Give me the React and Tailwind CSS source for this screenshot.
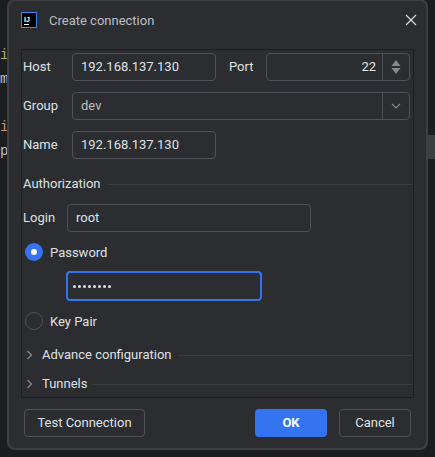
import React from 'react'

function Field({ value, className = '' }) {
  return (
    <div className={`h-[28px] flex items-center pl-[8px] border border-[#4e5157] rounded-[4px] text-[#dfe1e5] ${className}`}>
      {value}
    </div>
  )
}

function Chevron() {
  return (
    <svg width="8" height="10" viewBox="0 0 8 10" fill="none" className="ml-[4px] mr-[8px]">
      <path d="M1.500 1l4 4-4 4" stroke="#868a91" strokeWidth="1.2" />
    </svg>
  )
}

function Section({ label, className = '' }) {
  return (
    <div className={`flex items-center h-[20px] ${className}`}>
      <Chevron />
      <span className="text-[#dfe1e5]">{label}</span>
      <div className="flex-1 h-px bg-[#393b40] ml-[6px]" />
    </div>
  )
}

export default function App() {
  return (
    <div className="relative w-[435px] h-[457px] overflow-hidden bg-[#1c1d1f] text-[13px] leading-[16px] font-['Roboto',sans-serif]">
      {/* editor bits behind the dialog */}
      <div className="absolute left-0 top-[43px] font-['Liberation_Mono',monospace] text-[14px] leading-[24px]">
        <div className="text-[#b3ae60]">i</div>
        <div className="text-[#bcbec4]">m</div>
        <div>&nbsp;</div>
        <div className="text-[#cf8e6d]">i</div>
        <div className="text-[#bcbec4]">p</div>
      </div>
      <div className="absolute right-0 top-[135px] w-[8px] h-[24px] bg-[#3c3e42]" />

      <div className="relative ml-[7px] -mt-px w-[421px] h-[451px] bg-[#2b2d30] border-2 border-[#3d3f43] rounded-[8px] flex flex-col">
        <div className="h-[48px] flex items-start pt-[11px] pl-[12px] pr-[7px] shrink-0">
          <div className="w-[16px] h-[16px] bg-black border border-[#3b82f6] flex flex-col justify-center items-start pl-[2px] mr-[12px]">
            <span className="text-white text-[7px] leading-[7px] font-bold font-['Liberation_Sans',sans-serif]">IJ</span>
            <span className="block w-[5px] h-px bg-white mt-px" />
          </div>
          <span className="text-[#bcbec4] mt-px">Create connection</span>
          <svg width="12" height="12" viewBox="0 0 12 12" className="ml-auto mr-[2px] mt-[2px]" fill="none">
            <path d="M1 1l10 10M11 1L1 11" stroke="#dfe1e5" strokeWidth="1.1" />
          </svg>
        </div>

        <div className="ml-[12px] mr-[12px] h-[349px] border border-[#1e1f22] flex flex-col shrink-0">
          <div className="pt-[3px] flex items-center">
            <span className="w-[50px] text-[#dfe1e5] pl-px">Host</span>
            <Field value="192.168.137.130" className="w-[144px]" />
            <span className="w-[50px] pl-[13px] text-[#dfe1e5]">Port</span>
            <div className="w-[144px] h-[28px] flex items-center border border-[#4e5157] rounded-[4px] text-[#dfe1e5]">
              <span className="flex-1 text-right pr-[6px]">22</span>
              <div className="w-[27px] h-full border-l border-[#4e5157] flex flex-col items-center justify-center gap-[2px]">
                <svg width="10" height="6" viewBox="0 0 10 6"><path d="M5 0l4.500 6h-9z" fill="#868a91" /></svg>
                <svg width="10" height="6" viewBox="0 0 10 6"><path d="M5 6L.5 0h9z" fill="#868a91" /></svg>
              </div>
            </div>
          </div>

          <div className="pt-[11px] flex items-center">
            <span className="w-[50px] text-[#dfe1e5] pl-px">Group</span>
            <div className="w-[338px] h-[28px] flex items-center border border-[#4e5157] rounded-[4px]">
              <span className="flex-1 pl-[8px] text-[#bcbec4]">dev</span>
              <div className="w-[27px] h-full border-l border-[#4e5157] flex items-center justify-center">
                <svg width="10" height="6" viewBox="0 0 10 6" fill="none"><path d="M1 1l4 4 4-4" stroke="#868a91" strokeWidth="1.1" /></svg>
              </div>
            </div>
          </div>

          <div className="pt-[11px] flex items-center">
            <span className="w-[50px] text-[#dfe1e5] pl-px">Name</span>
            <Field value="192.168.137.130" className="w-[144px]" />
          </div>

          <div className="mt-[17px] flex items-center h-[16px] pl-px">
            <span className="text-[#dfe1e5]">Authorization</span>
            <div className="flex-1 h-px bg-[#393b40] ml-[6px]" />
          </div>

          <div className="mt-[12px] flex items-center">
            <span className="w-[45px] text-[#dfe1e5] pl-px">Login</span>
            <Field value="root" className="w-[244px]" />
          </div>

          <div className="mt-[11px] flex items-center h-[18px] pl-[3px]">
            <div className="w-[18px] h-[18px] rounded-full bg-[#3574f0] flex items-center justify-center">
              <div className="w-[6px] h-[6px] rounded-full bg-white" />
            </div>
            <span className="ml-[7px] pt-px text-[#dfe1e5]">Password</span>
          </div>

          <div className="mt-[10px] ml-[44px] w-[196px] h-[30px] border-2 border-[#3574f0] rounded-[4px] flex items-center pl-[5px] gap-[2px]">
            {[0, 1, 2, 3, 4, 5, 6, 7].map(i => (
              <span key={i} className="w-[3px] h-[3px] rounded-full bg-[#dfe1e5]" />
            ))}
          </div>

          <div className="mt-[11px] flex items-center h-[18px] pl-[3px]">
            <div className="w-[18px] h-[18px] rounded-full border border-[#4e5157]" />
            <span className="ml-[7px] pt-px text-[#dfe1e5]">Key Pair</span>
          </div>

          <Section label="Advance configuration" className="mt-[15px]" />
          <Section label="Tunnels" className="mt-[9px]" />
        </div>

        <div className="mt-[11px] ml-[15px] mr-[15px] flex items-center">
          <button className="h-[28px] w-[121px] border border-[#4e5157] rounded-[4px] text-[#dfe1e5]">Test Connection</button>
          <button className="ml-auto h-[28px] w-[72px] bg-[#3574f0] rounded-[4px] text-white font-bold">OK</button>
          <button className="ml-[12px] h-[28px] w-[72px] border border-[#4e5157] rounded-[4px] text-[#dfe1e5]">Cancel</button>
        </div>
      </div>
    </div>
  )
}
